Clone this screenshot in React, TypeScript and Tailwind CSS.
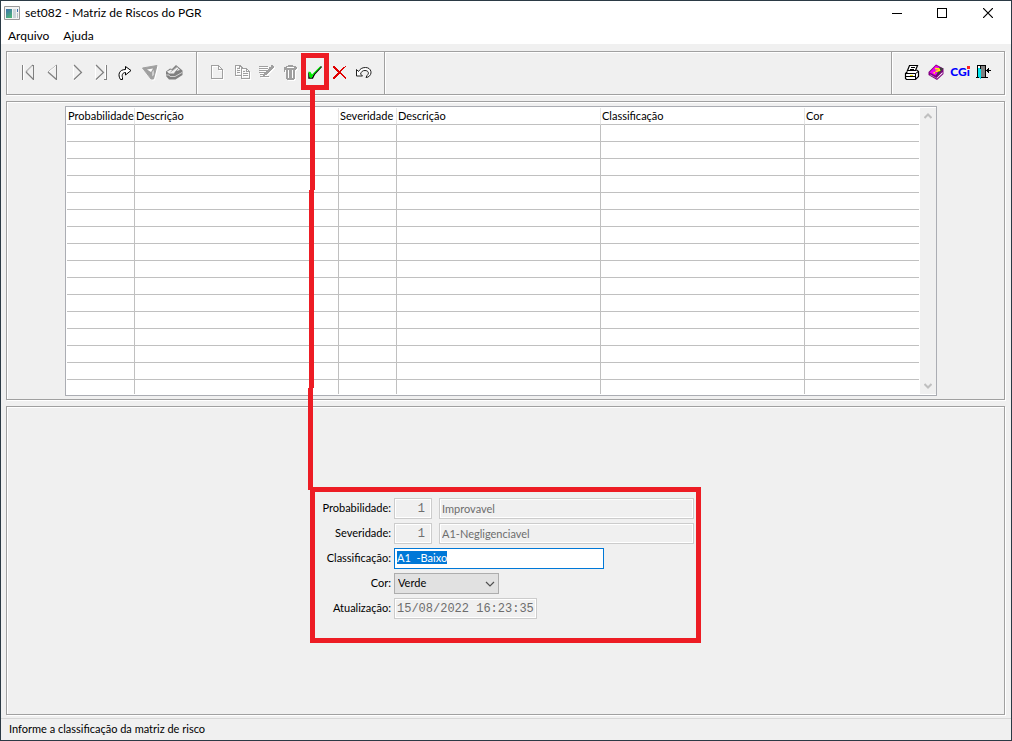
import React, { useEffect, useRef, useState } from "react";

interface Column {
  label: string;
  width: string;
}

const columns: Column[] = [
  { label: "Probabilidade", width: "w-[68px]" },
  { label: "Descrição", width: "w-[204px]" },
  { label: "Severidade", width: "w-[58px]" },
  { label: "Descrição", width: "w-[204px]" },
  { label: "Classificação", width: "w-[204px]" },
  { label: "Cor", width: "" },
];

const rows = Array.from({ length: 15 }, (_, i) => i);

const etched = "border border-[#a0a0a0] shadow-[inset_1px_1px_0_#fff,1px_1px_0_#fff]";
const disabledField =
  "h-[21px] border border-[#cccccc] bg-[#f0f0f0] px-[2px] text-[#6d6d6d] shadow-[inset_0_0_0_1px_#fff] outline-none";
const mono = "font-['Liberation_Mono',monospace] text-[12px]";

interface IconProps {
  children: React.ReactNode;
  disabled?: boolean;
  smooth?: boolean;
}

function Icon({ children, disabled, smooth }: IconProps) {
  return (
    <svg
      viewBox="0 0 18 18"
      fill="none"
      shapeRendering={smooth ? "auto" : "crispEdges"}
      className={`h-[18px] w-[18px] ${disabled ? "drop-shadow-[1px_1px_0_#fff]" : ""}`}
    >
      {children}
    </svg>
  );
}

function ToolButton({ label, children }: { label: string; children: React.ReactNode }) {
  return (
    <button type="button" aria-label={label} className="relative flex h-6 items-center justify-center">
      {children}
    </button>
  );
}

function NavigationTools() {
  return (
    <div className="grid w-[171px] grid-cols-7">
      <ToolButton label="Primeiro">
        <Icon smooth>
          <path d="M4.500 2v15M7 9.500l7.500-7.500" stroke="#fff" strokeWidth="1.400" />
          <path d="M3.500 2v15M14.500 2v15" stroke="#808080" />
          <path d="M7 9l7.500 7.500M7 9l7-7" stroke="#808080" strokeWidth="1.200" />
          <path d="M8 8.500l5.500-5.500" stroke="#fff" strokeWidth="1" />
        </Icon>
      </ToolButton>
      <ToolButton label="Anterior">
        <Icon smooth>
          <path d="M12.500 2v15" stroke="#808080" />
          <path d="M4 9l8.500 7.500" stroke="#808080" strokeWidth="1.300" />
          <path d="M4 9l8.500-7" stroke="#a8a8a8" />
          <path d="M5 9l7-6" stroke="#fff" />
        </Icon>
      </ToolButton>
      <ToolButton label="Próximo">
        <Icon smooth>
          <path d="M5.500 2v14M6.500 17.500l8-8" stroke="#fff" />
          <path d="M6 2l7.500 7.500L6 16.500" stroke="#808080" strokeWidth="1.300" />
        </Icon>
      </ToolButton>
      <ToolButton label="Último">
        <Icon smooth>
          <path d="M3.500 2v14M4.500 17.500l8-8M13.500 2v14" stroke="#fff" />
          <path d="M4 2l7.500 7.500L4 16.500" stroke="#808080" strokeWidth="1.300" />
          <path d="M14.500 2v15M12 16.500h2" stroke="#808080" />
        </Icon>
      </ToolButton>
      <ToolButton label="Ir para">
        <Icon smooth>
          <path
            d="M8.500 3.500l5.500 4-5.500 4.500V9.500C6 9.500 4.500 11.500 5.500 14.500v2h-2C0.500 12 2 6.500 8.500 6.500z"
            fill="#fff"
            stroke="#000"
          />
        </Icon>
      </ToolButton>
      <ToolButton label="Filtrar">
        <Icon disabled smooth>
          <path d="M1.500 5L16 2.500 12.500 16H10z" fill="#a0a0a0" stroke="#a0a0a0" />
          <path d="M6 6.500l6-1-2 3.500zM12.500 7v5l-1 1.500V9z" fill="#fff" />
        </Icon>
      </ToolButton>
      <ToolButton label="Localizar">
        <Icon smooth>
          <path d="M0 8.500L4 5.500l2 .5 4-4 6.500 5.500V12l-7 4.500H3L0 13z" fill="#808080" />
          <path d="M1 8.500l4-2 2 1 4-3.500 3 3-4 1-2 2.500H3z" fill="#f0f0f0" />
          <path d="M4.500 9L11 3.500M8.500 9.500l4-4" stroke="#a0a0a0" />
          <path d="M0 12h3l1 1.500h5l7-4" stroke="#d0d0d0" />
        </Icon>
      </ToolButton>
    </div>
  );
}

function EditTools() {
  return (
    <div className="grid w-[171px] grid-cols-7">
      <ToolButton label="Novo">
        <Icon disabled>
          <path d="M3.500 2.500h7l4 4v9h-11zM10.500 2.500v4h4" stroke="#a0a0a0" />
        </Icon>
      </ToolButton>
      <ToolButton label="Copiar">
        <Icon disabled>
          <path
            d="M8 12.500H2.500v-10H7l3 3M6.500 2.500v3M4 5.500h2M4 7.500h3M4 9.500h3M8.500 5.500h5l3 3v7h-8zM13.500 5.500v3h3M10 8.500h2M10 10.500h5M10 12.500h5"
            stroke="#a0a0a0"
          />
        </Icon>
      </ToolButton>
      <ToolButton label="Editar">
        <Icon disabled>
          <path d="M2 3.500h9M2 5.500h9M2 7.500h8M2 9.500h7M3 11.500h5M3 13.500h9" stroke="#a0a0a0" />
          <path d="M14 2h2v1h1v2h-1v1h-1v1h-1v1h-1v1h-1v1h-1v1h-1v1H8v1H6v-2h1v-1h1V9h1V8h1V7h1V6h1V4h2z" fill="#a0a0a0" />
        </Icon>
      </ToolButton>
      <ToolButton label="Excluir">
        <Icon disabled>
          <path d="M7 2h5v1h3v1h1v2h-1v1h-1v9h-1v1H6v-1H5V7H4v2H3V4h2V3h2z" fill="#a0a0a0" />
          <path d="M6 4h7v1H6zM7 7h1v8H7zM11 7h1v8h-1z" fill="#fff" />
        </Icon>
      </ToolButton>
      <ToolButton label="Confirmar">
        <Icon smooth>
          <path d="M3 9.500v5.500h3.500l2-4L15.500 3.500" stroke="#000" strokeWidth="1.500" />
          <path d="M2.500 8.500l2 .5 1.500 2.500L14 3.500l1 .5-7 7-2.500 4-2-.500z" fill="#00f000" />
        </Icon>
        <span className="pointer-events-none absolute -inset-x-[2px] -bottom-[6px] -top-[7px] border-5 border-[#ed1c24]" />
      </ToolButton>
      <ToolButton label="Cancelar">
        <Icon>
          <path
            d="M3 3h2v1h1v1h1v1h1v1h1v1h1V7h1V6h1V5h1V4h2V3h1v1h-1v1h-1v1h-1v1h-1v1h-1v2h1v1h1v1h1v1h1v1h1v1h-2v-1h-1v-1h-1v-1h-1v-1H9v1H8v1H7v1H6v1H5v1H3v-2h1v-1h1v-1h1v-1h1v-1h1V9H7V8H6V7H5V6H4V5H3z"
            fill="#e00000"
          />
          <path d="M15 15h1v1h-1z" fill="#e00000" />
        </Icon>
      </ToolButton>
      <ToolButton label="Desfazer">
        <Icon smooth>
          <path
            d="M1.500 6.500v6.500h6l-2-2c1-2.500 2-3.500 4.500-3.500 3.500 0 4.500 3 2 5l-1 2 2-.500C18 11.500 16.500 4.500 10.500 4.500 7 4.500 5 6 3.500 8.500z"
            fill="#fff"
            stroke="#202020"
          />
        </Icon>
      </ToolButton>
    </div>
  );
}

function SystemTools() {
  return (
    <div className="grid w-24 grid-cols-4">
      <ToolButton label="Imprimir">
        <Icon smooth>
          <path d="M6.500 2.500h8l-2 5h-8zM4.500 8.500L2.500 10.500v5l1 1h9l3-3V8.500l-2-1.500" fill="#fff" stroke="#000" strokeWidth="1.200" />
          <path d="M2.500 10.500h10v5.500M12.500 10.500l3-2M8 4.500h4M7 6.500h4M3 13.500h9" stroke="#000" />
          <path d="M7 12.500h3" stroke="#e0d800" />
        </Icon>
      </ToolButton>
      <ToolButton label="Ajuda">
        <Icon smooth>
          <path d="M1.500 9L9 1.500l7.500 4V11L10 17l-8.500-5z" fill="#800080" />
          <path d="M2.500 9.500L9 2.500l6 3-6.500 7z" fill="#f000f0" />
          <path d="M3 11.500l6.500 3.500L15.500 9v1.500L10 15.500l-7-3.500z" fill="#fff" />
          <path d="M12.500 4l4 1.500-5 6-2 1z" fill="#404040" />
          <path d="M8 5.500l4 .500.500 1.500-4 1M6.500 9.500l1.500.500" stroke="#ffff00" strokeWidth="1.500" />
        </Icon>
      </ToolButton>
      <ToolButton label="CGi">
        <span className="relative font-['Lato','Liberation_Sans',sans-serif] text-[12px] font-black leading-none text-[#0000ff]">
          CGi
          <span className="absolute right-0 top-0 h-[3px] w-[3px] bg-[#ff2020]" />
        </span>
      </ToolButton>
      <ToolButton label="Sair">
        <Icon>
          <path d="M2 2h9v13H2z" fill="#000" />
          <path d="M3 3h2v10H3z" fill="#fff" />
          <path d="M3 5h2v1h1v10H5v-1H4v-1H3z" fill="#00e5ee" />
          <path d="M6 3h4v11H6z" fill="#808080" />
          <path d="M1 14.500h2M10 14.500h3M13 7.500h3" stroke="#000" />
          <path d="M14 5v5h-1V9h-1V8h-1V7h1V6h1V5z" fill="#000" />
        </Icon>
      </ToolButton>
    </div>
  );
}

function RiskTable() {
  return (
    <div className="flex h-[290px] border border-[#abadb3] bg-white p-px pr-0">
      <div className="min-w-0 flex-1 overflow-hidden">
        <table className="w-full table-fixed border-separate border-spacing-0">
          <thead>
            <tr>
              {columns.map((col, i) => (
                <th
                  key={i}
                  className={`h-[17px] whitespace-nowrap border-b border-b-[#c0c0c0] border-r-[#e5e5e5] p-0 pl-px text-left font-normal leading-4 not-last:border-r ${col.width}`}
                >
                  {col.label}
                </th>
              ))}
            </tr>
          </thead>
          <tbody>
            {rows.map((row) => (
              <tr key={row}>
                {columns.map((_, i) => (
                  <td key={i} className="h-[17px] border-b border-[#c0c0c0] p-0 not-last:border-r" />
                ))}
              </tr>
            ))}
            <tr>
              {columns.map((_, i) => (
                <td key={i} className="h-[17px] border-[#c0c0c0] p-0 not-last:border-r" />
              ))}
            </tr>
          </tbody>
        </table>
      </div>
      <div className="ml-px flex w-4 flex-col items-center justify-between bg-[#f0f0f0] py-[5px]">
        <svg viewBox="0 0 8 6" className="h-[6px] w-2" fill="none">
          <path d="M0.500 5L4 1.500 7.500 5" stroke="#bfbfbf" strokeWidth="2" />
        </svg>
        <svg viewBox="0 0 8 6" className="h-[6px] w-2" fill="none">
          <path d="M0.500 1L4 4.500 7.500 1" stroke="#bfbfbf" strokeWidth="2" />
        </svg>
      </div>
    </div>
  );
}

function RiskForm() {
  const [classification, setClassification] = useState("A1  -Baixo");
  const [color, setColor] = useState("Verde");
  const inputRef = useRef<HTMLInputElement>(null);

  useEffect(() => {
    inputRef.current?.focus();
    inputRef.current?.select();
  }, []);

  return (
    <form
      onSubmit={(e) => e.preventDefault()}
      className="mx-auto flex w-[391px] flex-col gap-1 border-5 border-[#ed1c24] pb-[19px] pr-[2px] pt-[6px]"
    >
      <div className="flex items-center">
        <label htmlFor="prob" className="mr-[3px] w-[76px] text-right">Probabilidade:</label>
        <input id="prob" disabled value="1" className={`${disabledField} ${mono} mr-[7px] w-[38px] pr-[6px] text-right`} />
        <input aria-label="Descrição da probabilidade" disabled value="Improvavel" className={`${disabledField} min-w-0 flex-1`} />
      </div>
      <div className="flex items-center">
        <label htmlFor="sev" className="mr-[3px] w-[76px] text-right">Severidade:</label>
        <input id="sev" disabled value="1" className={`${disabledField} ${mono} mr-[7px] w-[38px] pr-[6px] text-right`} />
        <input aria-label="Descrição da severidade" disabled value="A1-Negligenciavel" className={`${disabledField} min-w-0 flex-1`} />
      </div>
      <div className="flex items-center">
        <label htmlFor="classif" className="mr-[3px] w-[76px] text-right">Classificação:</label>
        <input
          id="classif"
          ref={inputRef}
          value={classification}
          onChange={(e) => setClassification(e.target.value)}
          className="h-[21px] w-[210px] border border-[#0078d7] bg-white px-[2px] pb-[2px] outline-none selection:bg-[#0078d7] selection:text-white"
        />
      </div>
      <div className="flex items-center">
        <label htmlFor="cor" className="mr-[3px] w-[76px] text-right">Cor:</label>
        <div className="relative">
          <select
            id="cor"
            value={color}
            onChange={(e) => setColor(e.target.value)}
            className="block h-[21px] w-[105px] appearance-none border border-[#adadad] bg-[#e1e1e1] px-[3px] outline-none"
          >
            <option>Verde</option>
            <option>Amarelo</option>
            <option>Vermelho</option>
          </select>
          <svg viewBox="0 0 10 6" fill="none" className="pointer-events-none absolute right-1 top-2 h-[6px] w-[10px]">
            <path d="M1 1l4 4 4-4" stroke="#505050" strokeWidth="1.200" />
          </svg>
        </div>
      </div>
      <div className="flex items-center">
        <label htmlFor="atual" className="mr-[3px] w-[76px] text-right">Atualização:</label>
        <input id="atual" disabled value="15/08/2022 16:23:35" className={`${disabledField} ${mono} w-[143px]`} />
      </div>
    </form>
  );
}

export default function App() {
  return (
    <div className="relative flex min-h-screen flex-col border border-[#2b3a45] bg-[#f0f0f0] font-['Lato','Liberation_Sans',sans-serif] text-[11px] text-black">
      <header className="bg-white text-[12px]">
        <div className="flex h-6 items-center pl-[3px]">
          <svg viewBox="0 0 16 14" className="mr-[5px] h-[14px] w-4">
            <defs>
              <linearGradient id="win" x1="0" y1="0" x2="0.500" y2="1">
                <stop offset="0" stopColor="#3c6fae" />
                <stop offset="1" stopColor="#4cb07c" />
              </linearGradient>
            </defs>
            <path d="M0.500 0.500h15v13H0.500z" fill="#f4f4f4" stroke="#9a9a9a" />
            <path d="M2 3h6v9H2z" fill="url(#win)" />
            <path d="M9 3h3v9H9z" fill="#c9d4d8" />
            <path d="M13 3h1v3h-1z" fill="#3c6fae" />
            <path d="M13 7h1v5h-1z" fill="#b8c4c8" />
          </svg>
          <h1 className="flex-1">set082 - Matriz de Riscos do PGR</h1>
          <div className="flex">
            <button type="button" aria-label="Minimizar" className="flex h-6 w-[45px] items-center justify-center">
              <span className="h-px w-[10px] bg-black" />
            </button>
            <button type="button" aria-label="Maximizar" className="flex h-6 w-[46px] items-center justify-center">
              <span className="h-[10px] w-[10px] border border-black" />
            </button>
            <button type="button" aria-label="Fechar" className="flex h-6 w-[46px] items-center justify-center">
              <svg viewBox="0 0 10 10" className="h-[10px] w-[10px]">
                <path d="M0 0l10 10M10 0L0 10" stroke="#000" strokeWidth="1.200" />
              </svg>
            </button>
          </div>
        </div>
        <nav className="flex h-[19px] items-center gap-[14px] pl-[7px] pt-[3px]">
          <button type="button">Arquivo</button>
          <button type="button">Ajuda</button>
        </nav>
      </header>

      <main className="flex flex-1 flex-col gap-[6px] pb-[3px] pl-[5px] pr-[6px] pt-[7px]">
        <div className={`flex h-[44px] items-center ${etched}`}>
          <div className="flex h-full w-[190px] items-center border-r border-[#a0a0a0] pb-[2px] pl-[9px] shadow-[1px_0_0_#fff]">
            <NavigationTools />
          </div>
          <div className="flex h-full w-[188px] items-center border-r border-[#a0a0a0] pb-[2px] pl-2 shadow-[1px_0_0_#fff]">
            <EditTools />
          </div>
          <div className="flex-1" />
          <div className="flex h-full w-[113px] items-center border-l border-[#a0a0a0] pb-[2px] pl-2 shadow-[inset_1px_0_0_#fff]">
            <SystemTools />
          </div>
        </div>

        <section className={`pb-[3px] pl-[58px] pr-[67px] pt-1 ${etched}`}>
          <RiskTable />
        </section>

        <section className={`flex-1 pt-20 ${etched}`}>
          <RiskForm />
        </section>
      </main>

      <footer className="flex h-[22px] items-center border-t border-[#d7d7d7] pl-2">
        Informe a classificação da matriz de risco
      </footer>

      {/* callout line from the confirm button down to the form */}
      <svg
        viewBox="0 0 8 402"
        shapeRendering="crispEdges"
        className="pointer-events-none absolute left-[307px] top-[87px] h-[402px] w-2"
      >
        <path d="M2 0h5v102H6v198H5v102H0V300h1V102h1z" fill="#ed1c24" />
      </svg>
    </div>
  );
}
